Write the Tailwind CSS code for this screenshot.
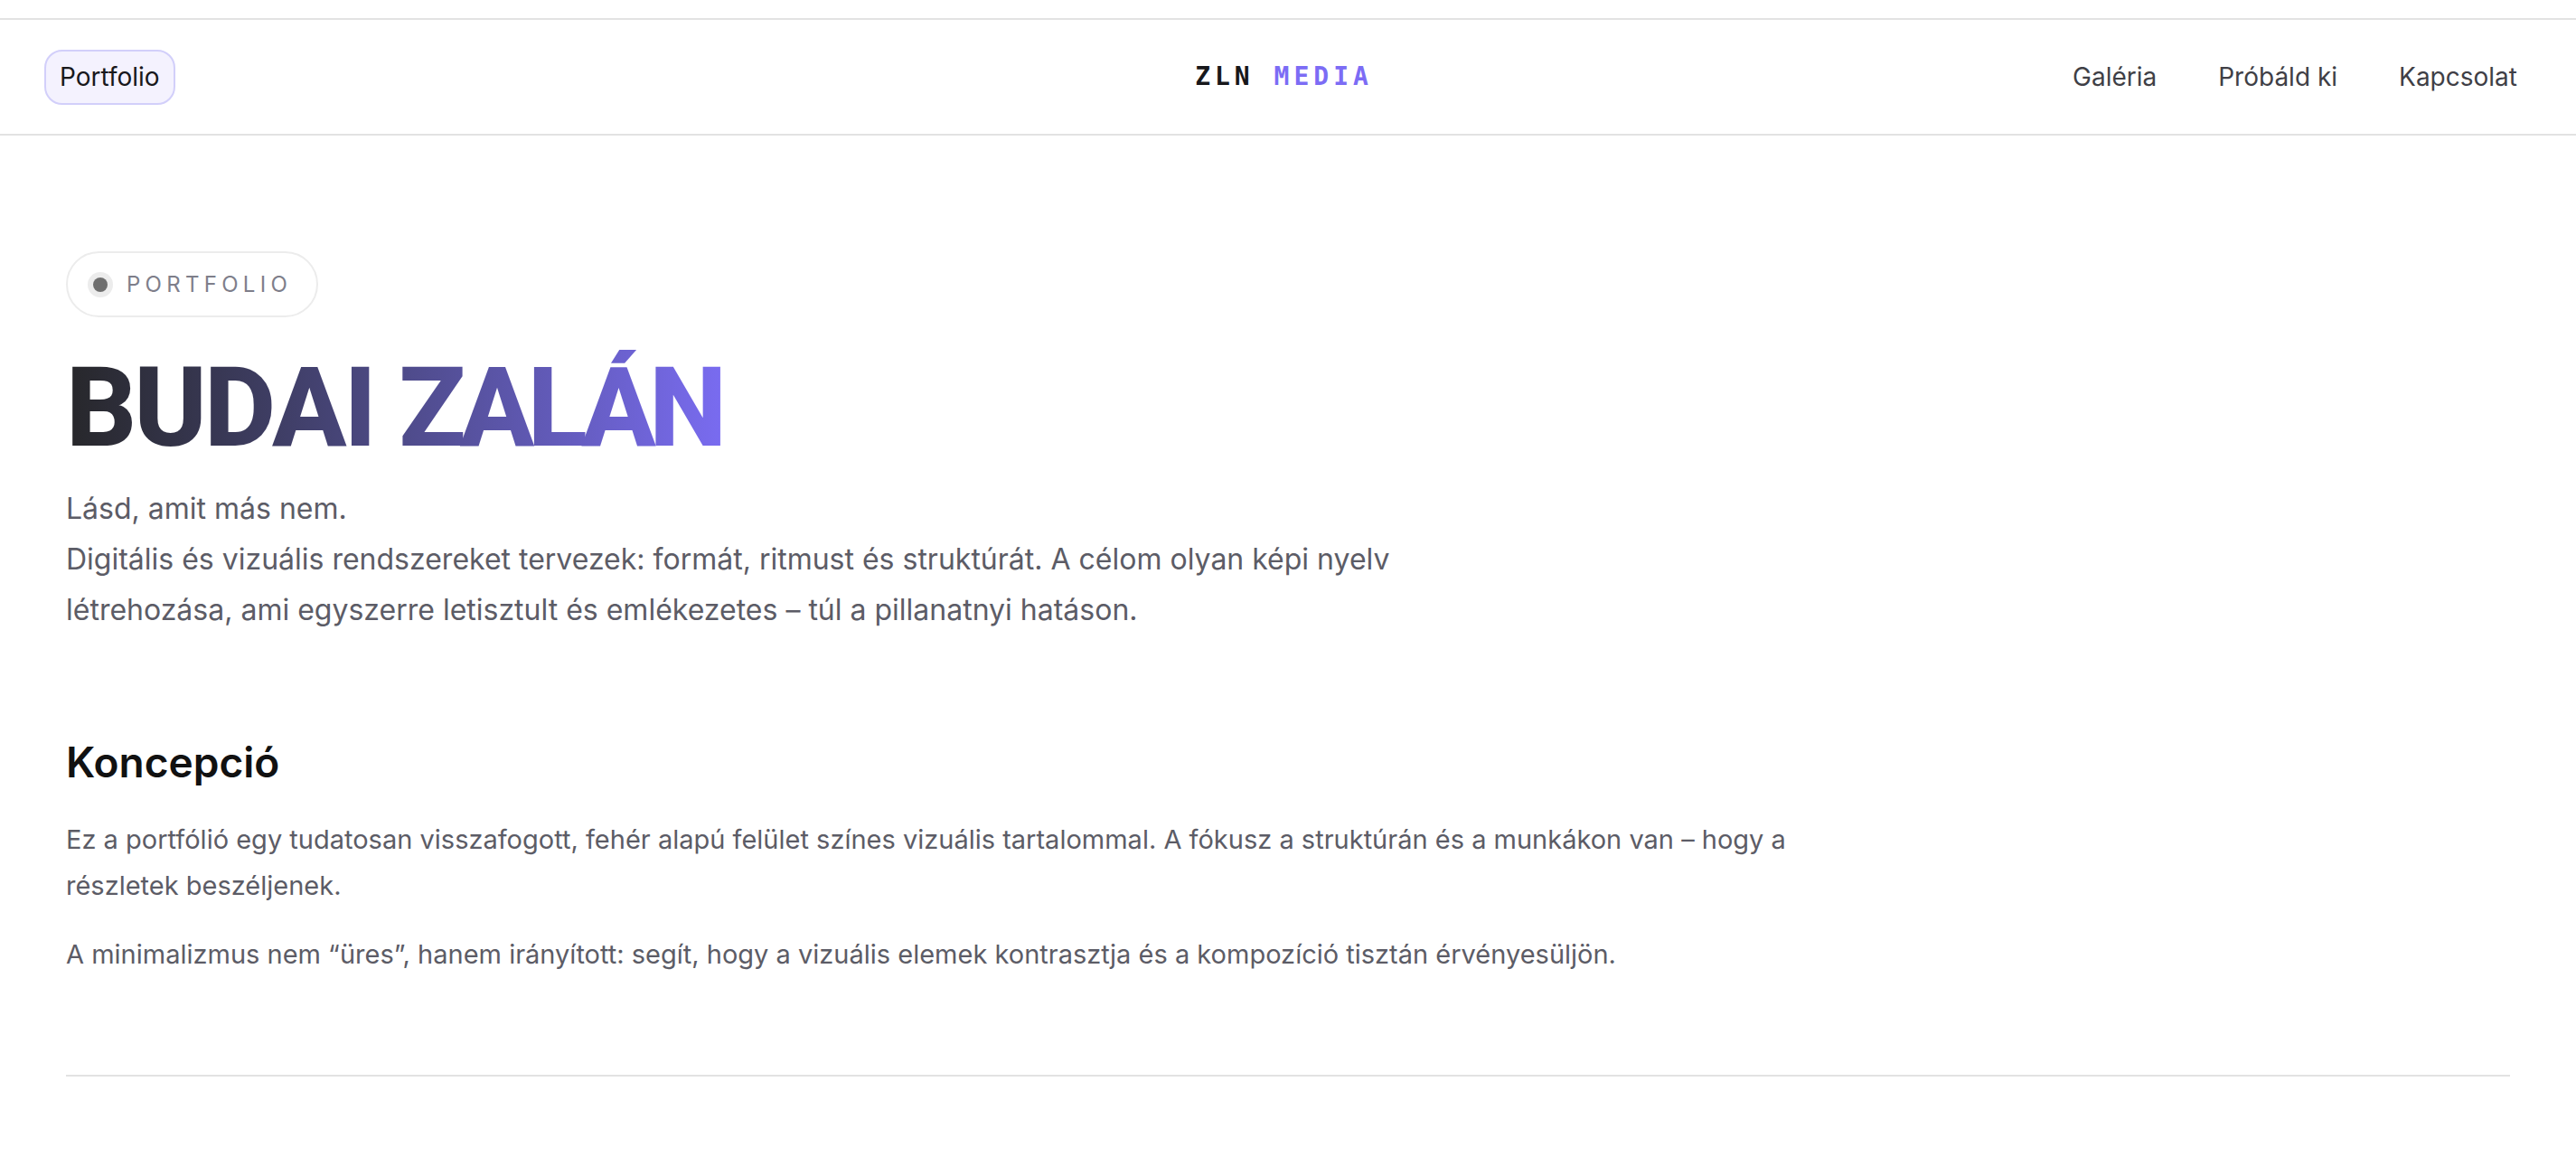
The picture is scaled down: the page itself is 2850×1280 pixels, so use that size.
<!DOCTYPE html>
<html lang="hu">
<head>
    <meta charset="UTF-8">
    <meta name="viewport" content="width=device-width, initial-scale=1.0">
    <title>ZLN Media - Portfolio</title>
    <script src="https://cdn.jsdelivr.net/npm/@tailwindcss/browser@4"></script>
</head>
<body class="bg-white font-['Inter',sans-serif] text-[#18181b]">
    <div class="h-[22px] border-b-2 border-[#e2e2e2]"></div>
    <header class="h-[128px] border-b-2 border-[#e2e2e2] pl-[49px] pr-[65px] grid grid-cols-[1fr_auto_1fr] items-center">
        <div>
            <a class="inline-flex items-center h-[61px] px-[15px] rounded-[20px] border-2 border-[#d2cffa] bg-[#f4f2fe] text-[28px] text-[#18181b]">Portfolio</a>
        </div>
        <div class="ml-[7px] text-[28px] font-bold tracking-[5px] font-['DejaVu_Sans_Mono',monospace]"><span class="text-[#18181b]">ZLN</span> <span class="text-[#7c6cf5]">MEDIA</span></div>
        <nav class="flex justify-end gap-[68px] text-[28px] text-[#3f3f46]">
            <a>Galéria</a>
            <a>Próbáld ki</a>
            <a>Kapcsolat</a>
        </nav>
    </header>
    <main class="px-[73px]">
        <section class="pt-[128px]">
            <div class="inline-flex items-center h-[73px] pl-[22px] pr-[27px] gap-[15px] rounded-full border-2 border-[#ececec]">
                <span class="w-[28px] h-[28px] rounded-full bg-[#ececec] flex items-center justify-center"><span class="w-[16px] h-[16px] rounded-full bg-[#6f6f6f]"></span></span>
                <span class="text-[24px] tracking-[0.22em] text-[#7e7e8a]">PORTFOLIO</span>
            </div>
            <h1 class="mt-[36px] text-[122px] leading-[130px] font-extrabold font-['Roboto',sans-serif]"><span class="inline-block pr-[8px] bg-linear-to-r from-[#27272a] to-[#7a6cf2] bg-clip-text text-transparent"><span class="tracking-[-3px]">BUDAI </span><span class="tracking-[-7.5px]">ZALÁN</span></span></h1>
            <p class="mt-[18px] text-[32px] leading-[56px] text-[#5c5c66]">Lásd, amit más nem.<br>Digitális és vizuális rendszereket tervezek: formát, ritmust és struktúrát. A célom olyan képi nyelv<br>létrehozása, ami egyszerre letisztult és emlékezetes – túl a pillanatnyi hatáson.</p>
        </section>
        <section class="mt-[110px]">
            <h2 class="text-[46px] leading-[60px] font-semibold text-[#111111]">Koncepció</h2>
            <p class="mt-[30px] text-[29px] leading-[51px] text-[#5c5c66] w-[1940px]">Ez a portfólió egy tudatosan visszafogott, fehér alapú felület színes vizuális tartalommal. A fókusz a struktúrán és a munkákon van – hogy a részletek beszéljenek.</p>
            <p class="mt-[25px] text-[29px] leading-[51px] text-[#5c5c66]">A minimalizmus nem “üres”, hanem irányított: segít, hogy a vizuális elemek kontrasztja és a kompozíció tisztán érvényesüljön.</p>
        </section>
        <hr class="mt-[108px] border-t-2 border-[#e2e2e2]">
    </main>
</body>
</html>
